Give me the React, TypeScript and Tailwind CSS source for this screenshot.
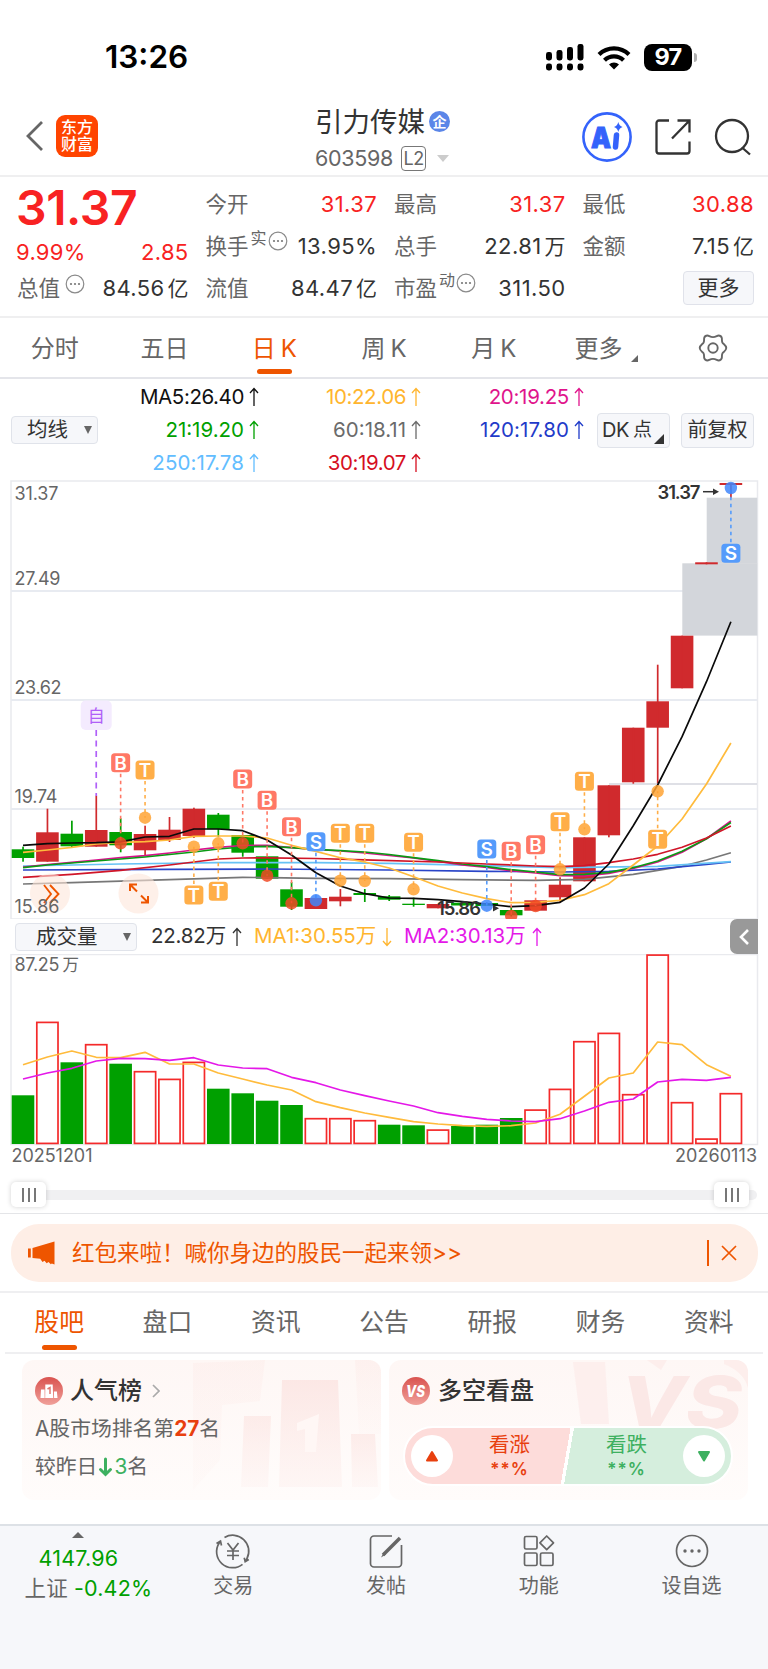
import React from 'react';

type Point = [number, number];

const STEP = 24.41;
const cx = (i: number) => 23 + i * STEP;
const RED = '#d02a2d';
const GREEN = '#00a000';

// [up, body top, body bottom, high, low]
const candles: [boolean, number, number, number, number][] = [
  [false, 849.3, 858, 846.7, 861.7],
  [true, 832.3, 861.7, 808.7, 861.7],
  [false, 833.7, 846.3, 820.7, 847],
  [true, 830, 846.7, 795.7, 846.7],
  [false, 832, 845.3, 818.3, 852.3],
  [true, 834, 850.3, 825.7, 856],
  [true, 829.7, 840, 817, 842],
  [true, 808.7, 836, 807.7, 838],
  [false, 814.7, 829.3, 813, 836.7],
  [false, 835, 852.7, 835, 856.7],
  [false, 856.3, 878.7, 856.3, 878.7],
  [false, 889.3, 906.7, 882, 910],
  [true, 898, 909, 898, 909],
  [true, 896.7, 901.3, 889, 906.3],
  [false, 893, 895, 889, 902],
  [false, 896.3, 899.7, 895, 901],
  [false, 903.7, 905, 897.7, 906.7],
  [true, 904, 908.3, 904, 908.3],
  [false, 902.7, 905.5, 902.7, 905.5],
  [false, 903, 906, 903, 906],
  [false, 910, 915.3, 907, 916.5],
  [true, 900.3, 910.7, 900.3, 910.7],
  [true, 884.7, 897.3, 877.3, 902.7],
  [true, 837.3, 881.3, 837.3, 881.3],
  [true, 785.3, 835.3, 785.3, 837.3],
  [true, 727.7, 782.3, 727.7, 783.7],
  [true, 701.3, 727.7, 664.7, 783.3],
  [true, 635.7, 688.3, 635.7, 688.3],
  [true, 562.3, 564.3, 562.3, 564.3],
  [true, 483, 485, 483, 497.7],
];

const ma5 = [845.3, 843.7, 843, 842.7, 841.8, 837, 836.3, 829, 829, 830.7, 840, 855, 872.7, 886, 893.7, 898, 898.3, 899.7, 901.7, 904, 906.7, 905.7, 902.3, 888, 864, 825.7, 785, 736.7, 681.7, 621.7];
const ma10 = [852.3, 850, 847.3, 844, 842.3, 841.7, 840, 836.3, 836, 836, 838, 845.3, 851.3, 857.7, 862, 868, 876.7, 886, 893, 898.7, 902.7, 902.3, 900.3, 894.7, 883.7, 865, 846, 819, 784, 743];
const ma21 = [867.7, 865, 863, 861, 859, 857, 854.5, 852, 849, 847, 846.3, 847.7, 849.3, 850.7, 852, 854.5, 857.7, 860.7, 864, 866.7, 869.7, 872, 874.7, 874.3, 872.3, 867.7, 861, 851.3, 838.7, 822.5];
const ma20 = [867, 864.5, 862.3, 860, 857.7, 855.7, 853, 850, 847.3, 845.5, 845.3, 847.7, 849.5, 851, 853, 855.5, 858, 861.5, 865, 867.5, 870.7, 873, 875.7, 876, 873.3, 868.5, 862, 852.3, 838.7, 821];

const ma30: Point[] = [[0, 877.3], [2, 874.3], [4, 870.3], [6, 865], [8, 859], [9, 858], [10, 857.8], [12, 858.5], [14, 859.8], [17, 862], [19, 864], [21, 866], [22, 866.7], [23, 865.7], [24, 862.7], [25, 859], [26, 854.3], [27, 847.3], [28, 838], [29, 826]];
const ma60: Point[] = [[0, 884], [2, 882.7], [5, 880.3], [9, 877.3], [12, 878.3], [15, 878.7], [18, 879.7], [21, 880.3], [23, 879.3], [25, 874.3], [27, 866.3], [28, 860], [29, 852.7]];
const ma120: Point[] = [[0, 870], [6, 869.3], [10, 869], [15, 870], [19, 871.3], [22, 872], [24, 871.3], [26, 869], [28, 864.3], [29, 862]];
const ma250: Point[] = [[0, 866], [4, 864], [8, 862.7], [12, 862.7], [15, 863.3], [19, 865.7], [22, 867.7], [26, 866.3], [29, 861.7]];

// [candle index, letter, badge y, dot y]
const marks: [number, 'B' | 'T' | 'S', number, number][] = [
  [4, 'B', 762.7, 843.3],
  [5, 'T', 770, 817.7],
  [7, 'T', 895, 846.7],
  [8, 'T', 891.3, 843.3],
  [9, 'B', 779, 843.3],
  [10, 'B', 800.3, 875.7],
  [11, 'B', 826.7, 903.3],
  [12, 'S', 841.7, 900.3],
  [13, 'T', 833.3, 880.7],
  [14, 'T', 833.3, 881],
  [16, 'T', 842.3, 889.3],
  [19, 'S', 849, 905.7],
  [20, 'B', 851.3, 916],
  [21, 'B', 844.7, 906],
  [22, 'T', 821.7, 869.3],
  [23, 'T', 781.3, 829.3],
  [26, 'T', 839.3, 791.3],
  [29, 'S', 553.3, 488],
];
const markFill = { B: '#ff7866', T: '#ffae48', S: '#559bfb' };
const dotFill = { B: '#f04a26', T: '#ffa334', S: '#3f86fb' };

// [up, top of the bar]
const volumes: [boolean, number][] = [
  [false, 1095.3], [true, 1022], [false, 1062.3], [true, 1044.3], [false, 1063.7], [true, 1071.3],
  [true, 1079], [true, 1062], [false, 1088.7], [false, 1093.3], [false, 1100.7], [false, 1105],
  [true, 1118.3], [true, 1118.3], [true, 1120.3], [false, 1124.7], [false, 1125.3], [true, 1129.7],
  [false, 1126], [false, 1124.7], [false, 1118], [true, 1109.7], [true, 1089], [true, 1041.3],
  [true, 1033], [true, 1094.3], [true, 954.7], [true, 1102.3], [true, 1138.7], [true, 1093.3],
];
const vol1 = [1064.7, 1057, 1051, 1057.3, 1057.7, 1052.3, 1064, 1064, 1073, 1079, 1085, 1090, 1101.7, 1107.7, 1113, 1117.3, 1121.7, 1124, 1125.7, 1126.3, 1125.7, 1123, 1114.3, 1096.3, 1078, 1073, 1042, 1044.7, 1064.7, 1076.3];
const vol2 = [1079, 1073, 1068.3, 1061, 1058.3, 1058.7, 1060.3, 1057.7, 1065, 1068, 1068.7, 1077.3, 1082.7, 1090, 1095.7, 1101, 1106, 1112.7, 1116.3, 1119.3, 1121, 1121.7, 1118.7, 1111, 1102.3, 1099, 1082, 1079.3, 1080.3, 1077.3];

const dense = (ys: number[]): Point[] => ys.map((y, i) => [i, y]);

const Line = ({ pts, color }: { pts: Point[]; color: string }) => (
  <polyline points={pts.map(([i, y]) => `${cx(i)},${y}`).join(' ')} fill="none" stroke={color} strokeWidth="1.7" strokeLinejoin="round" />
);

const Arrow = ({ down = false }: { down?: boolean }) => (
  <svg width="10" height="20" viewBox="0 0 10 20" fill="none" stroke="currentColor" strokeWidth="1.3" className={down ? 'rotate-180' : ''}>
    <path d="M5 19V1.5M1 6l4-4.5L9 6" />
  </svg>
);

const Dots = () => (
  <svg width="20" height="20" viewBox="0 0 20 20" className="shrink-0">
    <circle cx="10" cy="10" r="8.8" fill="none" stroke="#8a8a8a" strokeWidth="1.2" />
    <circle cx="6" cy="10" r="1.1" fill="#777" />
    <circle cx="10" cy="10" r="1.1" fill="#777" />
    <circle cx="14" cy="10" r="1.1" fill="#777" />
  </svg>
);

const StatusBar = () => (
  <div className="flex h-[100px] items-start justify-between pt-[38px] pl-[105px] pr-[71px]">
    <div className="text-[31.5px] leading-[38px] font-semibold text-black">13:26</div>
    <div className="flex h-[38px] items-center">
      <svg width="38" height="27" viewBox="0 0 38 27" className="mr-[13px]">
        <rect x="0" y="8" width="6" height="8.5" rx="2.4" />
        <rect x="10.5" y="6" width="6" height="10.5" rx="2.4" />
        <rect x="21" y="3" width="6" height="13.5" rx="2.4" />
        <rect x="31.5" y="0" width="6" height="16.5" rx="2.4" />
        <rect x="0" y="19.5" width="6" height="7" rx="2.4" />
        <rect x="10.5" y="19.5" width="6" height="7" rx="2.4" />
        <rect x="21" y="19.5" width="6" height="7" rx="2.4" />
        <rect x="31.5" y="19.5" width="6" height="7" rx="2.4" />
      </svg>
      <svg width="34" height="25" viewBox="0 0 34 25" className="mr-[13px]" fill="none" stroke="#000" strokeWidth="4.2">
        <path d="M2 9.5a21.5 21.5 0 0 1 30 0" />
        <path d="M7.5 15.2a13.5 13.5 0 0 1 19 0" />
        <path d="M17 24.5l-5-5a7 7 0 0 1 10 0z" fill="#000" stroke="none" />
      </svg>
      <div className="flex h-[27px] w-[48px] items-center justify-center rounded-[8px] bg-black text-[23.5px] font-bold tracking-[-0.8px] text-white">97</div>
      <div className="ml-[2px] h-[9px] w-[3px] rounded-r-full bg-[#b0b0b0]" />
    </div>
  </div>
);

const Header = () => (
  <div className="flex h-[77px] items-center justify-between border-b-2 border-[#efeff0] pr-[16px] pl-[25px]">
    <div className="flex w-[290px] items-center pb-[3px]">
      <svg width="19" height="32" viewBox="0 0 19 32" fill="none" stroke="#666" strokeWidth="2.8">
        <path d="M17 2L3 16l14 14" />
      </svg>
      <div className="ml-[12px] flex h-[42px] w-[42px] flex-col items-center justify-center rounded-[9px] bg-[#ff4400] text-[16px] leading-[17.5px] font-medium text-white">
        <span>东方</span>
        <span>财富</span>
      </div>
    </div>
    <div className="flex flex-1 flex-col">
      <div className="flex h-[40px] items-center">
        <span className="text-[27.5px] leading-[40px] text-[#333]">引力传媒</span>
        <span className="ml-[4px] flex h-[21px] w-[21px] items-center justify-center rounded-full bg-[#5b86e8] text-[14px] font-bold text-white">企</span>
      </div>
      <div className="flex h-[32px] items-center pt-[1px]">
        <span className="text-[21.5px] tracking-[-0.3px] text-[#666]">603598</span>
        <span className="ml-[8px] flex h-[25px] w-[25px] items-center justify-center rounded-[4px] border border-[#777] text-[18px] tracking-[-0.5px] text-[#666]">L2</span>
        <svg width="12" height="7" viewBox="0 0 12 7" className="ml-[11px]">
          <path d="M0 0h12L6 7z" fill="#ccc" />
        </svg>
      </div>
    </div>
    <div className="flex items-center pb-[2px]">
      <svg width="52" height="52" viewBox="0 0 52 52">
        <circle cx="26" cy="26" r="23.6" fill="none" stroke="#3463fb" strokeWidth="2.6" />
        <text x="10" y="37" fontSize="29" fontWeight="900" fill="#3463fb" stroke="#3463fb" strokeWidth="1" textLength="20" lengthAdjust="spacingAndGlyphs">A</text>
        <path d="M35.5 24L34.5 36" stroke="#3463fb" strokeWidth="5.5" strokeLinecap="round" />
        <path d="M37.3 11q.9 4 4.3 5-3.4 1-4.3 5-.9-4-4.3-5 3.4-1 4.3-5z" fill="#3463fb" />
      </svg>
      <svg width="38" height="38" viewBox="0 0 38 38" fill="none" stroke="#333" strokeWidth="2.3" className="ml-[21px]">
        <path d="M15 2.5H5A2.5 2.5 0 0 0 2.5 5v28A2.5 2.5 0 0 0 5 35.5h28a2.5 2.5 0 0 0 2.5-2.5v-9.5" />
        <path d="M23.5 2.5h12v12M35.5 2.5L18 20.5" />
      </svg>
      <svg width="38" height="38" viewBox="0 0 38 38" fill="none" stroke="#333" strokeWidth="2.3" className="ml-[22px]">
        <circle cx="18" cy="18" r="16" />
        <path d="M28 29.5l8 7" />
      </svg>
    </div>
  </div>
);

const Cell = ({ label, value, unit, sup, dots, red }: { label: string; value: string; unit?: string; sup?: string; dots?: boolean; red?: boolean }) => (
  <div className="flex h-[42px] items-center justify-between whitespace-nowrap">
    <div className="flex items-center text-[21.5px] text-[#666]">
      {label}
      {sup && <span className="-mt-[16px] ml-[2px] text-[16px]">{sup}</span>}
      {dots && <span className={sup ? '-mt-[10px] ml-[1px]' : '-mt-[9px] ml-[5px]'}><Dots /></span>}
    </div>
    <div className={`text-[22px] tracking-[0.4px] ${red ? 'text-[#f82222]' : 'text-[#333]'}`}>
      {value}
      {unit && <span className="ml-[3px] text-[21px] tracking-normal">{unit}</span>}
    </div>
  </div>
);

const Quote = () => (
  <div className="grid h-[141px] grid-cols-4 gap-x-[17px] border-b-2 border-[#efeff0] pt-[6px] pr-[14px] pl-[17px]">
    <div>
      <div className="-ml-px h-[51px] text-[48px] leading-[49px] font-semibold tracking-[-0.4px] text-[#f82222]">31.37</div>
      <div className="flex h-[33px] items-center justify-between pt-[3px] text-[22px] tracking-[0.3px] text-[#f82222]">
        <span className="-ml-px">9.99%</span>
        <span>2.85</span>
      </div>
      <Cell label="总值" value="84.56" unit="亿" dots />
    </div>
    <div>
      <Cell label="今开" value="31.37" red />
      <Cell label="换手" sup="实" dots value="13.95%" />
      <Cell label="流值" value="84.47" unit="亿" />
    </div>
    <div>
      <Cell label="最高" value="31.37" red />
      <Cell label="总手" value="22.81" unit="万" />
      <Cell label="市盈" sup="动" dots value="311.50" />
    </div>
    <div>
      <Cell label="最低" value="30.88" red />
      <Cell label="金额" value="7.15" unit="亿" />
      <div className="flex h-[42px] items-center justify-end">
        <button className="h-[34px] w-[71px] rounded-[4px] border border-[#e0e2ea] bg-[#f6f7fa] text-[21px] leading-[30px] text-[#333]">更多</button>
      </div>
    </div>
  </div>
);

const PeriodTabs = () => (
  <div className="grid h-[61px] grid-cols-7 border-b-2 border-[#e4e5ea] text-[24px] text-[#666]">
    {['分时', '五日', '日K', '周K', '月K'].map((t) => (
      <div key={t} className={`flex flex-col items-center pt-[12px] ${t === '日K' ? 'text-[#ee5500]' : ''}`}>
        <span className="h-[39px] leading-[38px]">{t[1] === 'K' ? <>{t[0]}<span className="ml-[5px]">K</span></> : t}</span>
        {t === '日K' && <span className="h-[5px] w-[35px] rounded-full bg-[#ee5500]" />}
      </div>
    ))}
    <div className="flex items-start justify-center pt-[12px] pl-[6px] leading-[38px]">
      更多
      <svg width="7" height="7" viewBox="0 0 7 7" className="mt-[25px] ml-[9px]"><path d="M7 0v7H0z" fill="#666" /></svg>
    </div>
    <div className="flex items-start justify-center pt-[15px]">
      <svg width="30" height="30" viewBox="0 0 30 30" fill="none" stroke="#666" strokeWidth="1.9" strokeLinejoin="round">
        <path d="M9.500 2.500c1.400 0 2.600 1.600 5.500 1.600s4.100-1.600 5.500-1.600 3 1.200 3.300 2.400c.3 1.500-.2 3.400.7 4.800s3.500 2.200 3.800 5.300c-.3 3.100-2.900 3.900-3.800 5.300s-.4 3.300-.7 4.800c-.3 1.200-1.900 2.400-3.300 2.400s-2.600-1.600-5.500-1.600-4.100 1.600-5.500 1.600-3-1.200-3.300-2.400c-.3-1.500.2-3.400-.7-4.800S2 18.100 1.700 15c.3-3.100 2.900-3.900 3.800-5.300s.4-3.300.7-4.800c.3-1.200 1.900-2.400 3.300-2.400z" />
        <circle cx="15" cy="15" r="4.7" />
      </svg>
    </div>
  </div>
);

const Ma = ({ text, cls }: { text: string; cls: string }) => (
  <div className={`flex h-[33px] items-center justify-end gap-[5px] text-[20.5px] ${cls}`}>
    <span>{text}</span>
    <Arrow />
  </div>
);

const Averages = () => (
  <div className="flex h-[101px] pt-[1.5px]">
    <div className="flex w-[98px] items-center pl-[11px]">
      <div className="flex h-[28px] w-[87px] items-center justify-between rounded-[4px] border border-[#e0e3ea] bg-[#f6f7fa] pr-[5px] pl-[15px] text-[20.5px] leading-[26px] text-[#333]">
        均线
        <svg width="8" height="8" viewBox="0 0 8 8"><path d="M0 0h8L4 8z" fill="#666" /></svg>
      </div>
    </div>
    <div className="w-[161px]">
      <Ma text="MA5:26.40" cls="tracking-[-0.4px] text-[#111]" />
      <Ma text="21:19.20" cls="text-[#00a000]" />
      <Ma text="250:17.78" cls="tracking-[0.1px] text-[#62bdff]" />
    </div>
    <div className="w-[162px]">
      <Ma text="10:22.06" cls="tracking-[-0.4px] text-[#ffb52e]" />
      <Ma text="60:18.11" cls="text-[#6b6b6b]" />
      <Ma text="30:19.07" cls="tracking-[-0.4px] text-[#d60f1f]" />
    </div>
    <div className="w-[163px]">
      <Ma text="20:19.25" cls="tracking-[-0.3px] text-[#e0148c]" />
      <Ma text="120:17.80" cls="tracking-[0.1px] text-[#1f3bc9]" />
    </div>
    <div className="flex flex-1 items-center justify-end gap-[11px] pr-[14px] text-[20px] text-[#333]">
      <div className="flex h-[35px] w-[73px] items-center rounded-[4px] border border-[#e0e3ea] bg-[#f6f7fa] pl-[4px] whitespace-nowrap">
        <span className="tracking-[-0.5px]">DK</span>
        <span className="ml-[4px] text-[19px]">点</span>
        <svg width="10" height="10" viewBox="0 0 10 10" className="mt-[17px] ml-[2px]"><path d="M10 0v10H0z" fill="#333" /></svg>
      </div>
      <div className="flex h-[35px] w-[73px] items-center justify-center rounded-[4px] border border-[#e0e3ea] bg-[#f6f7fa] whitespace-nowrap">前复权</div>
    </div>
  </div>
);

const KLine = () => (
  <svg width="768" height="439" viewBox="0 480 768 439" className="block">
    <path d="M11 481H757.5V919H11z" fill="none" stroke="#e9eaee" strokeWidth="1.5" />
    <path d="M11 591H757M11 700H757M11 809H757" stroke="#e8ebf1" strokeWidth="1.8" />
    <rect x="706.7" y="497.7" width="50.5" height="66" fill="#d3d6db" />
    <rect x="682.3" y="563.3" width="75" height="72.3" fill="#d3d6db" />
    <path d="M609 784H757" stroke="#d4d6de" strokeWidth="1.5" />

    {candles.map(([up, top, bottom, high, low], i) => (
      <g key={i} fill={up ? RED : GREEN}>
        <rect x={cx(i) - 11.3} y={top} width="22.6" height={bottom - top} />
        <rect x={cx(i) - 0.8} y={high} width="1.7" height={low - high} />
      </g>
    ))}

    <Line pts={ma60} color="#777" />
    <Line pts={ma120} color="#2a45c8" />
    <Line pts={ma250} color="#66c2f5" />
    <Line pts={dense(ma20)} color="#d8108c" />
    <Line pts={dense(ma21)} color="#0a9a14" />
    <Line pts={ma30} color="#d01528" />
    <Line pts={dense(ma10)} color="#ffbb3c" />
    <Line pts={dense(ma5)} color="#0a0a0a" />

    <circle cx="50" cy="893.5" r="20" fill="#fde6da" opacity="0.6" />
    <circle cx="138.5" cy="893.5" r="20" fill="#fde6da" opacity="0.6" />
    <path d="M44 885l7 9-7 9M50 885l8.5 9-8.5 9" fill="none" stroke="#ee5500" strokeWidth="1.9" />
    <path d="M130 891v-6.500h7M130.500 885l6.500 6.500M141 895.500l6.500 6.500M148 896v6.500h-7" fill="none" stroke="#ee5500" strokeWidth="2" />

    <path d={`M${cx(3)} 730V796`} stroke="#b060f8" strokeWidth="1.7" strokeDasharray="6 4.5" />
    <rect x="80.7" y="700.5" width="31" height="29.5" rx="5" fill="#f4ebfe" />
    <text x="96.2" y="722" fontSize="17" textAnchor="middle" fill="#b060f8">自</text>

    {marks.map(([i, letter, y, dot]) => (
      <g key={i}>
        <path d={`M${cx(i)} ${y + (dot > y ? 11 : -11)}V${dot}`} stroke={markFill[letter]} strokeWidth="1.6" strokeDasharray="3.5 3.5" />
        <circle cx={cx(i)} cy={dot} r="6.2" fill={dotFill[letter]} opacity="0.85" />
        <rect x={cx(i) - 9.5} y={y - 9.5} width="19" height="19" rx="3.5" fill={markFill[letter]} />
        <text x={cx(i)} y={y + 6.8} fontSize="19" fontWeight="600" textAnchor="middle" fill="#fff">{letter}</text>
      </g>
    ))}

    <g fontSize="18" fill="#666">
      <text x="14.5" y="500" textLength="44">31.37</text>
      <text x="14.5" y="584.5" textLength="46">27.49</text>
      <text x="14.5" y="694" textLength="47">23.62</text>
      <text x="14.5" y="803.3" textLength="43">19.74</text>
      <text x="14.5" y="912.7" textLength="45">15.86</text>
    </g>
    <g fontSize="18.5" fontWeight="600" fill="#333">
      <text x="657.5" y="498.5" textLength="43">31.37</text>
      <text x="437" y="915" textLength="44">15.86</text>
    </g>
    <path d="M703 491.7h12" stroke="#333" strokeWidth="1.5" />
    <path d="M713 488.500l6 3.200-6 3.200zM493 905l6 3.200-6 3.200z" fill="#333" />
  </svg>
);

const VolumeInfo = () => (
  <div className="flex h-[35px] items-center pr-[10px] pl-[15px] text-[20.5px]">
    <div className="flex h-[28px] w-[122px] items-center justify-between rounded-[4px] border border-[#e0e3ea] bg-[#f6f7fa] pr-[5px] pl-[20px] leading-[26px] text-[#333]">
      成交量
      <svg width="8" height="8" viewBox="0 0 8 8"><path d="M0 0h8L4 8z" fill="#666" /></svg>
    </div>
    <div className="ml-[14px] flex w-[103px] items-center justify-between pr-[12px] text-[#333]"><span className="tracking-[-0.2px]">22.82万</span><Arrow /></div>
    <div className="flex w-[150px] items-center justify-between pr-[12px] whitespace-nowrap text-[#ffb52e]"><span>MA1:30.55万</span><Arrow down /></div>
    <div className="flex w-[138px] items-center justify-between whitespace-nowrap text-[#e418e8]"><span>MA2:30.13万</span><Arrow /></div>
    <div className="ml-auto flex h-[35px] w-[28px] items-center justify-center rounded-l-[7px] bg-[#999]">
      <svg width="10" height="16" viewBox="0 0 10 16" fill="none" stroke="#fff" strokeWidth="2.6"><path d="M9 1L2 8l7 7" /></svg>
    </div>
  </div>
);

const Volume = () => (
  <svg width="768" height="216" viewBox="0 954 768 216" className="block">
    <path d="M11 954.5H757.5V1144.5H11z" fill="none" stroke="#e9eaee" strokeWidth="1.5" />
    {volumes.map(([up, top], i) =>
      up ? (
        <rect key={i} x={cx(i) - 10.6} y={top + 0.4} width="21.2" height={1143 - top} fill="#fff" stroke="#f42a2a" strokeWidth="1.7" />
      ) : (
        <rect key={i} x={cx(i) - 11.3} y={top} width="22.6" height={1144 - top} fill={GREEN} />
      )
    )}
    <Line pts={dense(vol1)} color="#ffbb3c" />
    <Line pts={dense(vol2)} color="#e418e8" />
    <g fontSize="18" fill="#666">
      <text x="14.5" y="971" textLength="45">87.25</text>
      <text x="62.5" y="971" fontSize="16.5">万</text>
      <text x="11.5" y="1162" textLength="81">20251201</text>
      <text x="675" y="1162" textLength="82">20260113</text>
    </g>
  </svg>
);

const Handle = () => (
  <div className="z-10 flex h-[25px] w-[35px] items-center justify-center gap-[4px] rounded-[5px] bg-white shadow-[0_0_5px_rgba(0,0,0,0.18)]">
    <span className="h-[14px] w-[2px] bg-[#777]" />
    <span className="h-[14px] w-[2px] bg-[#777]" />
    <span className="h-[14px] w-[2px] bg-[#777]" />
  </div>
);

const RangeSlider = () => (
  <div className="h-[44px] border-b border-[#e4e5e8] px-[11px] pt-[12px]">
    <div className="flex h-[25px] items-center">
      <Handle />
      <div className="-mx-[4px] h-[10px] flex-1 bg-[#f0f0f2]" />
      <Handle />
      <div className="-ml-[4px] h-[10px] w-[12px] rounded-r-full bg-[#f0f0f2]" />
    </div>
  </div>
);

const Banner = () => (
  <div className="h-[79px] border-b-2 border-[#efeff1] px-[10.5px] pt-[10px]">
    <div className="flex h-[58px] items-center rounded-[28px] bg-[#feeee6] pr-[21px] pl-[17px] text-[#ee5500]">
      <svg width="28" height="24" viewBox="0 0 28 24" fill="#ee5500">
        <path d="M0 7.500h2.800v9H0zM4.500 7L26.500 .5v23l-2.700-1-1 .8-2.300-2.300-1.800 1.300-2.200-2.500-2 1.300-2.300-3.300L4.500 17z" />
      </svg>
      <span className="ml-[16.5px] text-[22.5px]">红包来啦！喊你身边的股民一起来领&gt;&gt;</span>
      <span className="ml-auto h-[26px] w-[1.5px] bg-[#ee5500]" />
      <svg width="16" height="16" viewBox="0 0 16 16" fill="none" stroke="#ee5500" strokeWidth="1.7" className="ml-[12px]">
        <path d="M1 1l14 14M15 1L1 15" />
      </svg>
    </div>
  </div>
);

const InfoTabs = () => (
  <div className="mx-[5px] flex h-[61px] border-b-2 border-[#efeff1] text-[24.8px] text-[#666]">
    {['股吧', '盘口', '资讯', '公告', '研报', '财务', '资料'].map((t, i) => (
      <div key={t} className={`flex flex-1 flex-col items-center pt-[10px] ${i === 0 ? 'text-[#ee5500]' : ''}`}>
        <span className="h-[42px] leading-[39px]">{t}</span>
        {i === 0 && <span className="h-[5px] w-[35px] rounded-full bg-[#ee5500]" />}
      </div>
    ))}
  </div>
);

const RankCard = () => (
  <div className="relative h-[140px] w-[359px] overflow-hidden rounded-[12px] bg-gradient-to-b from-[#fef7f5] to-[#fffcfb]">
    <svg width="359" height="140" viewBox="0 0 359 140" className="absolute inset-0">
      <defs>
        <linearGradient id="rank" x1="0" y1="0" x2="0" y2="1">
          <stop offset="0" stopColor="#fbdfdc" stopOpacity="0.65" />
          <stop offset="1" stopColor="#fdf0ee" stopOpacity="0.5" />
        </linearGradient>
      </defs>
      <path d="M171 3l72-3-5 41-38 4-2 55-27 30z" fill="url(#rank)" opacity="0.35" />
      <path d="M333 0h26v74h-22z" fill="url(#rank)" opacity="0.4" />
      <path d="M222 56h27l-3 71h-27z" fill="url(#rank)" opacity="0.8" />
      <path d="M260 20h56l4 107h-63z" fill="url(#rank)" />
      <path d="M329 74h24l3 53h-26z" fill="url(#rank)" opacity="0.8" />
      <path d="M275 63l22-9-3 38h-11V69l-8 2z" fill="#fff7f5" />
    </svg>
    <div className="relative pt-[12px] pl-[13px]">
      <div className="flex h-[38px] items-center">
        <svg width="28" height="28" viewBox="0 0 28 28">
          <defs>
            <linearGradient id="dot" x1="0" y1="0" x2="0" y2="1">
              <stop offset="0" stopColor="#d9534f" />
              <stop offset="1" stopColor="#f0a09a" />
            </linearGradient>
          </defs>
          <circle cx="14" cy="14" r="14" fill="url(#dot)" />
          <path d="M6 12.500h3.600V21H5.500zM10.300 7.500h7.400l.5 13.500h-8zM18.900 14.500h3l.6 6.500h-3.400z" fill="#fff" />
          <path d="M12.500 12l2.500-1.500V17" stroke="#e07870" strokeWidth="1.5" fill="none" />
        </svg>
        <span className="ml-[7px] text-[24px] font-medium text-[#333]">人气榜</span>
        <svg width="8" height="14" viewBox="0 0 8 14" fill="none" stroke="#aaa" strokeWidth="1.7" className="ml-[10px]"><path d="M1 1l6 6-6 6" /></svg>
      </div>
      <div className="h-[38px] text-[20.8px] leading-[38px] text-[#666]">A股市场排名第<b className="font-bold text-[#e8400f]">27</b>名</div>
      <div className="flex h-[38px] items-center text-[20.8px] text-[#666]">
        较昨日
        <svg width="15" height="20" viewBox="0 0 15 20" fill="none" stroke="#3db060" strokeWidth="3" strokeLinecap="round" className="mx-[1px]">
          <path d="M7.500 2v15M2.500 12.500l5 5 5-5" />
        </svg>
        <span className="text-[#3db060]">3</span>名
      </div>
    </div>
  </div>
);

const VsCard = () => (
  <div className="relative h-[140px] w-[359px] overflow-hidden rounded-[12px] bg-gradient-to-b from-[#fef7f5] to-[#fffcfb]">
    <svg width="359" height="140" viewBox="0 0 359 140" className="absolute inset-0">
      <path d="M184 2h32l4 62h-28z" fill="#fcebe9" opacity="0.7" />
      <text x="231" y="68" fontSize="72" fontWeight="800" fontStyle="italic" fill="#fbe5e3" opacity="0.85" textLength="122" lengthAdjust="spacingAndGlyphs">VS</text>
      <path d="M258 0h20l-6 10zM335 0h24v28q-4-16-24-24z" fill="#fbe8e6" opacity="0.6" />
    </svg>
    <div className="relative pt-[12px] pl-[13px]">
      <div className="flex h-[38px] items-center">
        <svg width="28" height="28" viewBox="0 0 28 28">
          <circle cx="14" cy="14" r="14" fill="url(#dot)" />
          <text x="4" y="20" fontSize="16.5" fontWeight="800" fontStyle="italic" fill="#fff" textLength="19" lengthAdjust="spacingAndGlyphs">VS</text>
        </svg>
        <span className="ml-[8px] text-[24px] font-medium text-[#333]">多空看盘</span>
      </div>
      <div className="mt-[16px] ml-px flex h-[60px] w-[330px] items-center rounded-full border-2 border-white bg-[linear-gradient(100deg,#fddcda_0%,#fddcda_49.3%,#fff_49.3%,#fff_50.3%,#d5eedd_50.3%,#d5eedd_100%)] px-[6px] text-center text-[20.5px]">
        <span className="flex h-[42px] w-[42px] items-center justify-center rounded-full bg-white">
          <svg width="14" height="12" viewBox="0 0 14 12"><path d="M7 2l5 8.500H2z" fill="#e8400f" stroke="#e8400f" strokeWidth="2" strokeLinejoin="round" /></svg>
        </span>
        <div className="flex flex-1 flex-col items-center pr-[2px] text-[#e8400f]">
          <span className="leading-[26px]">看涨</span>
          <span className="text-[17px] leading-[22px] font-semibold tracking-[1px]">**%</span>
        </div>
        <div className="flex flex-1 flex-col items-center pl-[2px] text-[#3db060]">
          <span className="leading-[26px]">看跌</span>
          <span className="text-[17px] leading-[22px] font-semibold tracking-[1px]">**%</span>
        </div>
        <span className="flex h-[42px] w-[42px] items-center justify-center rounded-full bg-white">
          <svg width="14" height="12" viewBox="0 0 14 12"><path d="M7 10.500L2 2h10z" fill="#3db060" stroke="#3db060" strokeWidth="2" strokeLinejoin="round" /></svg>
        </span>
      </div>
    </div>
  </div>
);

const NavItem = ({ label, children }: { label: string; children: React.ReactNode }) => (
  <div className="flex w-[153px] flex-col items-center pt-[6px]">
    <svg width="38" height="38" viewBox="0 0 38 38" fill="none" stroke="#666" strokeWidth="1.7">{children}</svg>
    <span className="mt-[1px] text-[20px] leading-[30px] text-[#666]">{label}</span>
  </div>
);

const BottomNav = () => (
  <div className="flex h-[145px] border-t-2 border-[#dde1e6] bg-[#f6f7fa]">
    <div className="flex w-[157px] flex-col items-center pt-[6px] text-[21.5px] tracking-[0.2px] whitespace-nowrap text-[#00a000]">
      <svg width="12" height="6" viewBox="0 0 12 6"><path d="M6 0l6 6H0z" fill="#666" /></svg>
      <span className="mt-[5px] h-[30px] leading-[30px]">4147.96</span>
      <span className="pl-[20px] leading-[30px]"><span className="mr-[6px] text-[#666]">上证</span>-0.42%</span>
    </div>
    <NavItem label="交易">
      <path d="M10.5 5.5A16 16 0 0 1 33 26.5l-1.5 3M34.8 27.5l-3.6 2.2-1-4M28.5 32.3A16 16 0 0 1 5.2 11l1-2M2.5 11.5l4-2.5 1 4.5" />
      <path d="M13.5 11l5.5 7 5.5-7M19 18v10M13 19h12M13 23.5h12" />
    </NavItem>
    <NavItem label="发帖">
      <path d="M25 4H7a3.500 3.500 0 0 0-3.500 3.500v24A3.500 3.500 0 0 0 7 35h24a3.500 3.500 0 0 0 3.500-3.500V13" />
      <path d="M33 6L16 23" strokeWidth="3.6" />
      <path d="M17 20l-3 5.500 5-3z" fill="#666" stroke="none" />
    </NavItem>
    <NavItem label="功能">
      <rect x="4.5" y="4.5" width="12.5" height="12.5" rx="1.5" />
      <rect x="4.5" y="21" width="12.5" height="12.5" rx="1.5" />
      <rect x="20.5" y="21" width="12.5" height="12.5" rx="1.5" />
      <path d="M26.7 4l6.8 6.8-6.8 6.8-6.8-6.8z" strokeLinejoin="round" />
    </NavItem>
    <NavItem label="设自选">
      <circle cx="19" cy="19" r="15.5" />
      <g fill="#666" stroke="none">
        <circle cx="12" cy="19" r="1.7" />
        <circle cx="19" cy="19" r="1.7" />
        <circle cx="26" cy="19" r="1.7" />
      </g>
    </NavItem>
  </div>
);

export default function App() {
  return (
    <div className="h-[1669px] w-[768px] overflow-hidden bg-white font-['Inter','Noto_Sans_CJK_SC',sans-serif]">
      <StatusBar />
      <Header />
      <Quote />
      <PeriodTabs />
      <Averages />
      <KLine />
      <VolumeInfo />
      <Volume />
      <RangeSlider />
      <Banner />
      <InfoTabs />
      <div className="flex h-[170px] gap-[8px] pt-[6px] pl-[22px]">
        <RankCard />
        <VsCard />
      </div>
      <BottomNav />
    </div>
  );
}
